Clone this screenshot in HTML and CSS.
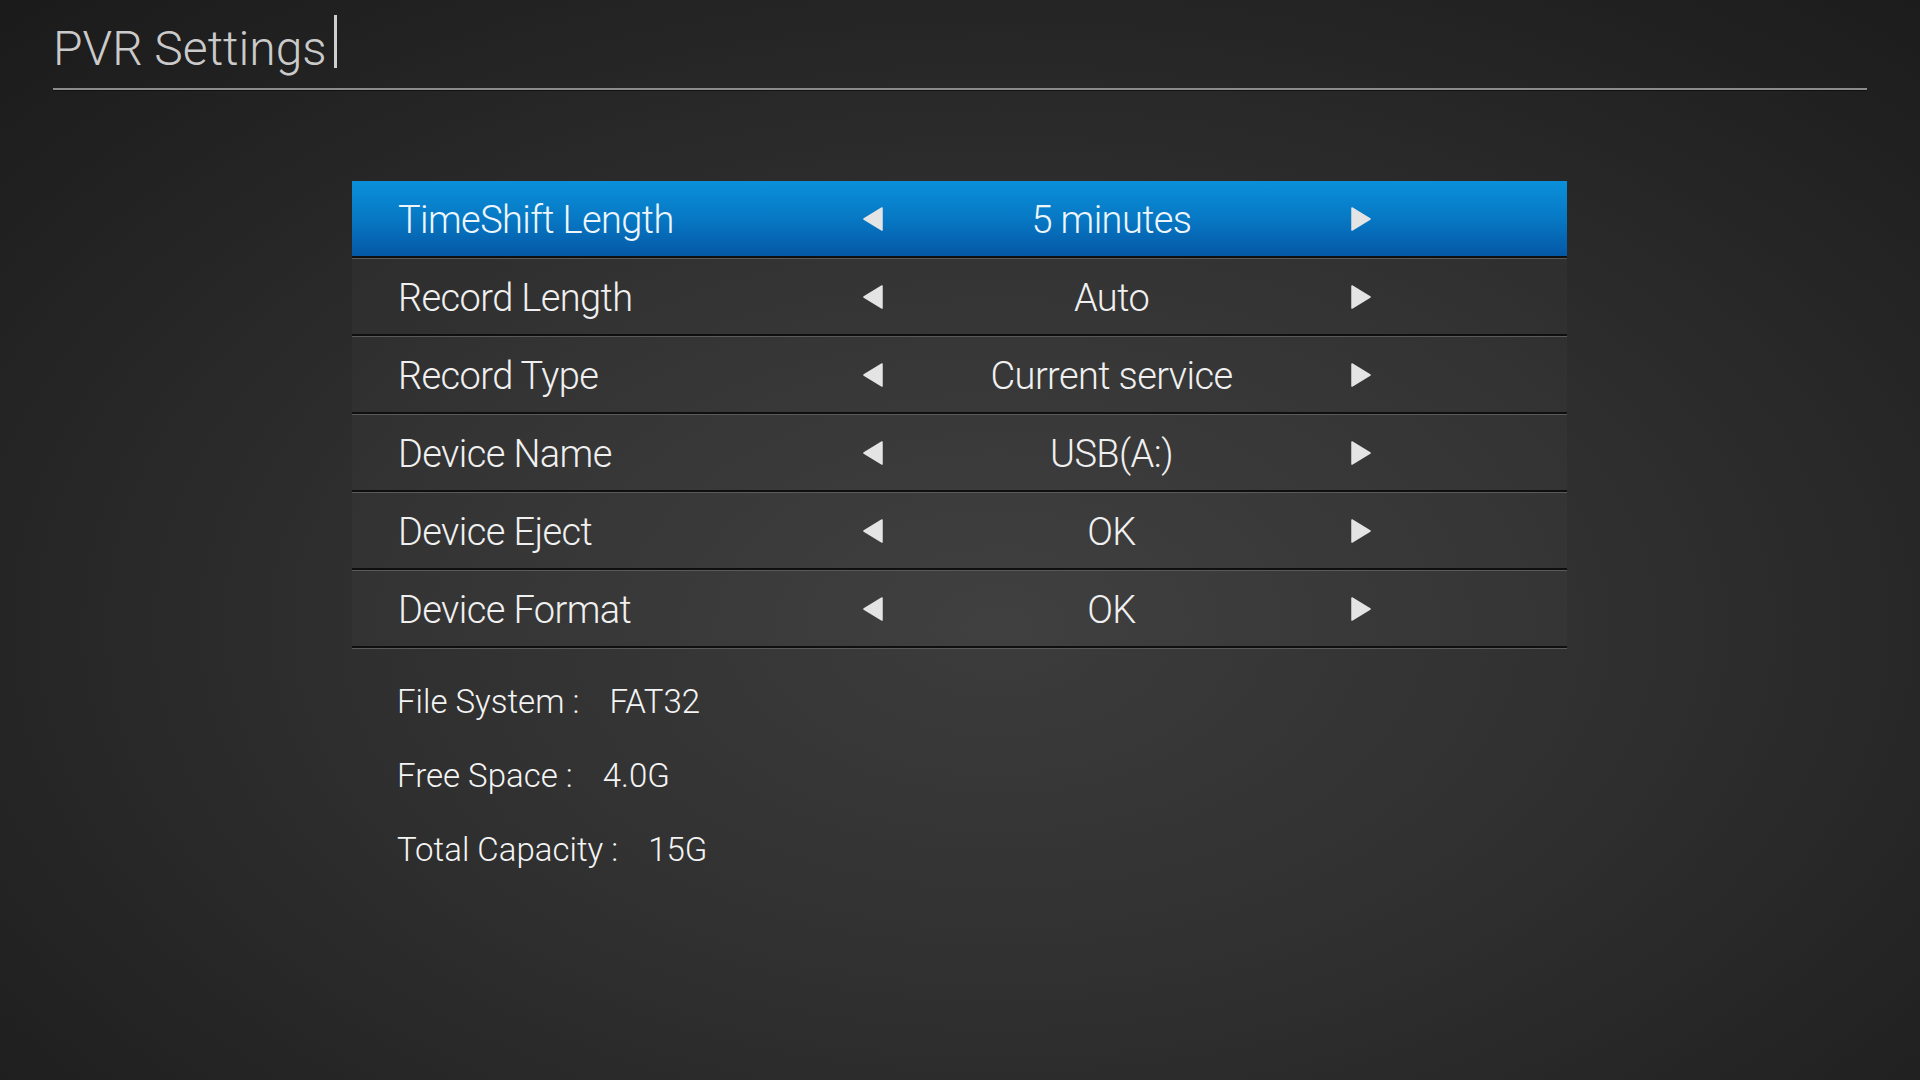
FILE: index.html
```html
<!DOCTYPE html>
<html lang="en">
<head>
<meta charset="utf-8">
<title>PVR Settings</title>
<link rel="stylesheet" href="styles.css">
</head>
<body>
<div class="screen">
  <header class="header">
    <h1 class="title">PVR Settings</h1>
    <span class="cursor"></span>
  </header>
  <div class="divider"></div>

  <div class="menu">
    <div class="row selected">
      <span class="label">TimeShift Length</span>
      <svg class="arrow" viewBox="0 0 20 24"><path d="M19 1 L1 12 L19 23 Z"/></svg>
      <span class="value">5 minutes</span>
      <svg class="arrow right" viewBox="0 0 20 24"><path d="M1 1 L19 12 L1 23 Z"/></svg>
    </div>
    <div class="row">
      <span class="label">Record Length</span>
      <svg class="arrow" viewBox="0 0 20 24"><path d="M19 1 L1 12 L19 23 Z"/></svg>
      <span class="value">Auto</span>
      <svg class="arrow right" viewBox="0 0 20 24"><path d="M1 1 L19 12 L1 23 Z"/></svg>
    </div>
    <div class="row">
      <span class="label">Record Type</span>
      <svg class="arrow" viewBox="0 0 20 24"><path d="M19 1 L1 12 L19 23 Z"/></svg>
      <span class="value">Current service</span>
      <svg class="arrow right" viewBox="0 0 20 24"><path d="M1 1 L19 12 L1 23 Z"/></svg>
    </div>
    <div class="row">
      <span class="label">Device Name</span>
      <svg class="arrow" viewBox="0 0 20 24"><path d="M19 1 L1 12 L19 23 Z"/></svg>
      <span class="value">USB(A:)</span>
      <svg class="arrow right" viewBox="0 0 20 24"><path d="M1 1 L19 12 L1 23 Z"/></svg>
    </div>
    <div class="row">
      <span class="label">Device Eject</span>
      <svg class="arrow" viewBox="0 0 20 24"><path d="M19 1 L1 12 L19 23 Z"/></svg>
      <span class="value">OK</span>
      <svg class="arrow right" viewBox="0 0 20 24"><path d="M1 1 L19 12 L1 23 Z"/></svg>
    </div>
    <div class="row">
      <span class="label">Device Format</span>
      <svg class="arrow" viewBox="0 0 20 24"><path d="M19 1 L1 12 L19 23 Z"/></svg>
      <span class="value">OK</span>
      <svg class="arrow right" viewBox="0 0 20 24"><path d="M1 1 L19 12 L1 23 Z"/></svg>
    </div>

    <div class="info">
      <div class="info-line">File System :<span class="info-value">FAT32</span></div>
      <div class="info-line">Free Space :<span class="info-value">4.0G</span></div>
      <div class="info-line">Total Capacity :<span class="info-value">15G</span></div>
    </div>
  </div>
</div>
</body>
</html>
```
FILE: styles.css
```css
html, body {
  margin: 0;
  padding: 0;
}

body {
  width: 1920px;
  height: 1080px;
  overflow: hidden;
  font-family: Roboto, "Noto Sans", "Liberation Sans", sans-serif;
  background: radial-gradient(ellipse 78% 85% at 52% 58%, #3c3c3c 0%, #303030 40%, #222222 75%, #191919 100%);
}

.screen {
  width: 1920px;
  height: 1080px;
}

.header {
  display: flex;
  align-items: flex-start;
  padding: 15px 0 0 53px;
}

.title {
  margin: 7px 0 0 0;
  font-size: 48px;
  line-height: 53px;
  font-weight: 300;
  color: #cacaca;
}

.cursor {
  width: 3px;
  height: 53px;
  margin-left: 7px;
  background: #cfcfcf;
}

.divider {
  margin: 13px 0 0 53px;
  width: 1814px;
  height: 2px;
  background: #8c8c8c;
  box-shadow: 0 1px 0 #111;
}

.menu {
  margin: 91px 0 0 352px;
  width: 1215px;
}

.row {
  box-sizing: border-box;
  height: 77px;
  margin-bottom: 1px;
  display: grid;
  grid-template-columns: 465px 20px 452px 36px;
  align-items: center;
  padding-left: 46px;
  border-bottom: 2px solid #0f0f0f;
  box-shadow: 0 1px 0 #5a5a5a;
  background: rgba(255, 255, 255, 0.025);
  color: #f0f0f0;
}

.row.selected {
  background: linear-gradient(to bottom, #0a90da 0%, #0778c4 50%, #0558a6 100%);
  color: #eef6fc;
}

.label, .value {
  font-size: 38px;
  font-weight: 300;
  letter-spacing: -0.6px;
  line-height: 72px;
  padding-top: 3px;
  white-space: nowrap;
}

.value {
  text-align: center;
  padding-left: 5px;
}

.arrow {
  width: 20px;
  height: 24px;
  display: block;
}

.arrow path {
  fill: #e4e4e4;
  stroke: #e4e4e4;
  stroke-width: 1.5;
  stroke-linejoin: round;
}

.arrow.right {
  justify-self: end;
}

.info {
  margin-top: 17px;
  padding-left: 45px;
}

.info-line {
  font-size: 33px;
  font-weight: 300;
  line-height: 74px;
  color: #f4f4f4;
  white-space: nowrap;
}

.info-value {
  margin-left: 30px;
}
```
